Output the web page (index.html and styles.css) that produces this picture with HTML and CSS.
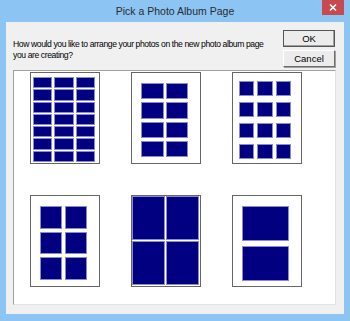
FILE: index.html
```html
<!DOCTYPE html>
<html>
<head>
  <title>Pick a Photo Album Page</title>
  <link rel="stylesheet" href="styles.css">
</head>
<body>
  <div class="window">
    <div class="titlebar">
      <span></span>
      <span class="title">Pick a Photo Album Page</span>
      <span class="close">
        <svg width="8" height="7" viewBox="0 0 8 7"><path d="M1 0.5 L7 6.5 M7 0.5 L1 6.5" stroke="#fff" stroke-width="1.6" /></svg>
      </span>
    </div>

    <div class="dialog">
      <div class="top">
        <p class="prompt">How would you like to arrange your photos on the new photo album page you are creating?</p>
        <div class="buttons">
          <button class="btn default">OK</button>
          <button class="btn">Cancel</button>
        </div>
      </div>

      <div class="layouts">
        <div class="page p21">
          <div></div><div></div><div></div>
          <div></div><div></div><div></div>
          <div></div><div></div><div></div>
          <div></div><div></div><div></div>
          <div></div><div></div><div></div>
          <div></div><div></div><div></div>
          <div></div><div></div><div></div>
        </div>
        <div class="page p8">
          <div></div><div></div>
          <div></div><div></div>
          <div></div><div></div>
          <div></div><div></div>
        </div>
        <div class="page p12">
          <div></div><div></div><div></div>
          <div></div><div></div><div></div>
          <div></div><div></div><div></div>
          <div></div><div></div><div></div>
        </div>
        <div class="page p6">
          <div></div><div></div>
          <div></div><div></div>
          <div></div><div></div>
        </div>
        <div class="page p4">
          <div></div><div></div>
          <div></div><div></div>
        </div>
        <div class="page p2">
          <div></div>
          <div></div>
        </div>
      </div>
    </div>
  </div>
</body>
</html>
```

FILE: styles.css
```css
body {
  margin: 0;
  font-family: "Liberation Sans", Arial, sans-serif;
}
.window {
  width: 350px;
  height: 321px;
  box-sizing: border-box;
  background: #8cc5f4;
  padding: 0 6px 7px 6px;
  display: flex;
  flex-direction: column;
}
.titlebar {
  height: 22px;
  margin: 0 -6px;
  display: grid;
  grid-template-columns: 1fr auto 1fr;
}
.title {
  font-size: 10.5px;
  line-height: 22px;
  color: #2b2b2b;
}
.close {
  justify-self: end;
  width: 22px;
  height: 15px;
  margin-right: 6px;
  background: #c74a50;
  display: flex;
  align-items: center;
  justify-content: center;
}
.dialog {
  flex: 1;
  background: #f0f0f0;
  display: flex;
  flex-direction: column;
}
.top {
  display: flex;
  justify-content: space-between;
  align-items: flex-start;
}
.prompt {
  margin: 17px 0 0 7px;
  width: 262px;
  font-size: 8.6px;
  letter-spacing: -0.4px;
  line-height: 11px;
  color: #000;
}
.buttons {
  margin: 8px 9px 0 0;
  display: flex;
  flex-direction: column;
  gap: 3px;
}
.btn {
  width: 52px;
  height: 17px;
  padding: 0;
  font-family: "Liberation Sans", Arial, sans-serif;
  font-size: 9.5px;
  color: #000;
  background: #ececec;
  border: 1px solid;
  border-color: #fff #6d6d6d #6d6d6d #fff;
  box-shadow: 1px 1px 0 #a0a0a0;
}
.btn.default {
  border-color: #555;
  box-shadow: inset -1px -1px 0 #a0a0a0;
}
.layouts {
  flex: 1;
  margin: 3px 8px 9px 7px;
  background: #fff;
  border: 1px solid;
  border-color: #a0a0a0 #e3e3e3 #e3e3e3 #a0a0a0;
  padding: 1px 0 0 16px;
  display: grid;
  grid-template-columns: repeat(3, 70px);
  grid-template-rows: repeat(2, 92px);
  column-gap: 31px;
  row-gap: 31px;
  align-content: start;
}
.page {
  box-sizing: border-box;
  border: 1px solid #666;
  background: #fff;
  display: grid;
}
.page div {
  box-sizing: border-box;
  background: #000080;
  border: 1px solid #8a8ad0;
}
.p21 {
  padding: 4px 4px 1px 2px;
  grid-template-columns: repeat(3, 1fr);
  grid-template-rows: repeat(7, 1fr);
  gap: 1px 2px;
}
.p8 {
  padding: 10px 12px 6px 9px;
  grid-template-columns: repeat(2, 1fr);
  grid-template-rows: repeat(4, 1fr);
  gap: 3px 2px;
}
.p12 {
  padding: 8px 10px 4px 6px;
  grid-template-columns: repeat(3, 1fr);
  grid-template-rows: repeat(4, 1fr);
  gap: 6px 3px;
}
.p6 {
  padding: 10px 12px 6px 9px;
  grid-template-columns: repeat(2, 1fr);
  grid-template-rows: repeat(3, 1fr);
  gap: 3px;
}
.p4 {
  padding: 0 1px 1px 0;
  grid-template-columns: repeat(2, 1fr);
  grid-template-rows: repeat(2, 1fr);
  gap: 1px;
}
.p2 {
  padding: 10px 12px 5px 9px;
  grid-template-rows: repeat(2, 1fr);
  gap: 5px;
}
```
